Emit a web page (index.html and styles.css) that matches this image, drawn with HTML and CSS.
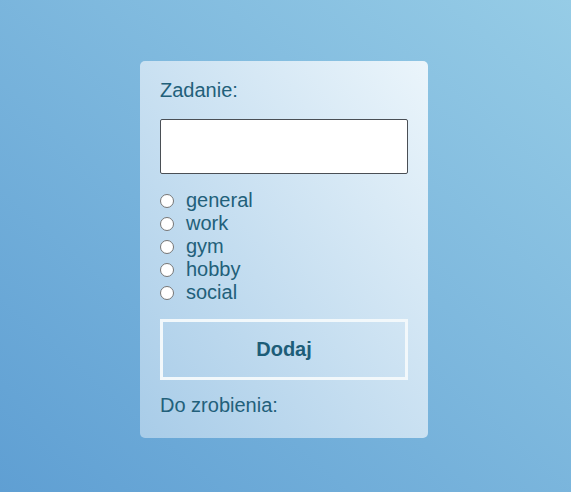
FILE: index.html
```html
<!DOCTYPE html>
<html lang="pl">
<head>
<meta charset="utf-8">
<title>Zadania</title>
<link rel="stylesheet" href="styles.css">
</head>
<body>
<main class="card">
  <label class="label" for="task">Zadanie:</label>
  <input class="task-input" id="task" type="text">
  <div class="radios">
    <label class="radio-row"><input class="radio" type="radio" name="cat" value="general"><span>general</span></label>
    <label class="radio-row"><input class="radio" type="radio" name="cat" value="work"><span>work</span></label>
    <label class="radio-row"><input class="radio" type="radio" name="cat" value="gym"><span>gym</span></label>
    <label class="radio-row"><input class="radio" type="radio" name="cat" value="hobby"><span>hobby</span></label>
    <label class="radio-row"><input class="radio" type="radio" name="cat" value="social"><span>social</span></label>
  </div>
  <button class="add-btn" type="button">Dodaj</button>
  <div class="label todo">Do zrobienia:</div>
</main>
</body>
</html>
```
FILE: styles.css
```css
html, body {
  margin: 0;
  padding: 0;
  height: 100%;
}
body {
  background: linear-gradient(to top right, #5f9fd3, #96cce6);
  font-family: "Liberation Sans", Arial, sans-serif;
  color: #22607a;
  display: flex;
  justify-content: center;
  align-items: flex-start;
  padding-top: 61px;
  box-sizing: border-box;
}
.card {
  width: 288px;
  box-sizing: border-box;
  padding: 18px 20px 21px;
  border-radius: 5px;
  background: linear-gradient(to top right, #a8cce8, #ebf5fb);
  display: flex;
  flex-direction: column;
  margin-right: 3px;
}
.label {
  display: block;
  font-size: 20px;
  line-height: 23px;
}
.task-input {
  margin: 17px 0 0;
  height: 55px;
  box-sizing: border-box;
  border: 1px solid #4a4f55;
  border-radius: 2px;
  background: #fff;
  font: 18px "Liberation Sans", Arial, sans-serif;
  padding: 0 8px;
  width: 100%;
}
.radios {
  margin-top: 15px;
  display: flex;
  flex-direction: column;
}
.radio-row {
  display: flex;
  align-items: center;
  height: 23px;
  font-size: 20px;
  line-height: 23px;
}
.radio {
  appearance: none;
  -webkit-appearance: none;
  width: 14px;
  height: 14px;
  margin: 0 12px 0 0;
  border: 1px solid #767676;
  border-radius: 50%;
  background: #fff;
  box-sizing: border-box;
  flex: none;
}
.radio:checked {
  background: radial-gradient(circle, #22607a 0 3px, #fff 3.5px);
}
.add-btn {
  margin-top: 15px;
  height: 61px;
  box-sizing: border-box;
  border: 3px solid #f2f8fb;
  background: transparent;
  color: #1d5d78;
  font: bold 20px "Liberation Sans", Arial, sans-serif;
  width: 100%;
}
.todo {
  margin-top: 14px;
}
```
